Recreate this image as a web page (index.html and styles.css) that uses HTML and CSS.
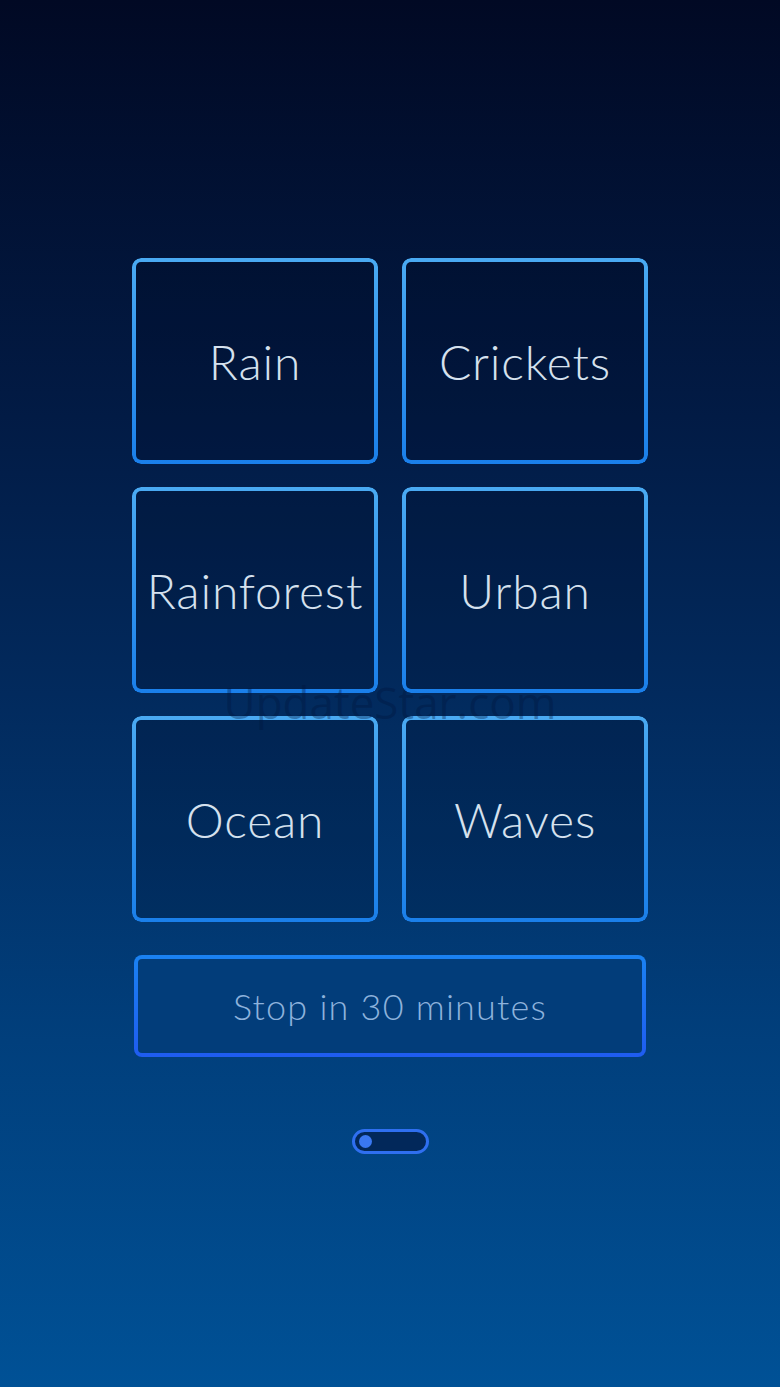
FILE: index.html
```html
<!DOCTYPE html>
<html>
<head>
<meta charset="utf-8">
<link rel="stylesheet" href="styles.css">
</head>
<body>
<div class="screen">
  <div class="grid">
    <div class="tile">Rain</div>
    <div class="tile">Crickets</div>
    <div class="tile">Rainforest</div>
    <div class="tile">Urban</div>
    <div class="tile">Ocean</div>
    <div class="tile">Waves</div>
  </div>
  <div class="stop">Stop in 30 minutes</div>
  <div class="toggle"><span class="knob"></span></div>
  <div class="watermark">UpdateStar.com</div>
</div>
</body>
</html>
```
FILE: styles.css
```css
html, body {
  margin: 0;
  padding: 0;
}
body {
  width: 780px;
  height: 1387px;
  overflow: hidden;
  font-family: Lato, "Open Sans", sans-serif;
  font-weight: 300;
}
.screen {
  position: relative;
  width: 780px;
  height: 1387px;
  background: linear-gradient(to bottom, #010924 0%, #021b45 30%, #022a5d 50%, #013f7c 75%, #005196 100%);
  display: flex;
  flex-direction: column;
  align-items: center;
  padding-top: 258px;
  box-sizing: border-box;
}
.grid {
  display: grid;
  grid-template-columns: 246px 246px;
  grid-auto-rows: 206px;
  column-gap: 24px;
  row-gap: 23px;
}
.tile {
  position: relative;
  border-radius: 9px;
  background: rgba(0, 8, 30, 0.18);
  display: flex;
  align-items: center;
  justify-content: center;
  box-sizing: border-box;
  color: #d5e1ee;
  font-size: 48px;
  letter-spacing: 0.8px;
}
.tile::before {
  content: "";
  position: absolute;
  inset: 0;
  border-radius: 9px;
  padding: 4px;
  background: linear-gradient(to bottom, #4aaaf2, #1a7fea);
  -webkit-mask: linear-gradient(#000 0 0) content-box, linear-gradient(#000 0 0);
  -webkit-mask-composite: xor;
  mask-composite: exclude;
}
.stop {
  margin-top: 33px;
  width: 512px;
  height: 102px;
  box-sizing: border-box;
  border: 4px solid transparent;
  border-radius: 8px;
  background:
    linear-gradient(#023d7a, #023d7a) padding-box,
    linear-gradient(to bottom, #1a82f2, #1f5cf0) border-box;
  display: flex;
  align-items: center;
  justify-content: center;
  color: #8db2dc;
  font-size: 36px;
  letter-spacing: 1.2px;
}
.toggle {
  margin-top: 72px;
  width: 77px;
  height: 25px;
  box-sizing: border-box;
  border: 3px solid #2f6ff0;
  border-radius: 13px;
  background: #02285a;
  display: flex;
  align-items: center;
  padding-left: 4px;
}
.knob {
  width: 13px;
  height: 13px;
  border-radius: 50%;
  background: #3a78f2;
}
.watermark {
  position: absolute;
  left: 0;
  right: 0;
  top: 672px;
  text-align: center;
  font-family: "Open Sans", sans-serif;
  font-weight: 400;
  font-size: 44px;
  color: rgba(0, 20, 60, 0.35);
  pointer-events: none;
}
```
